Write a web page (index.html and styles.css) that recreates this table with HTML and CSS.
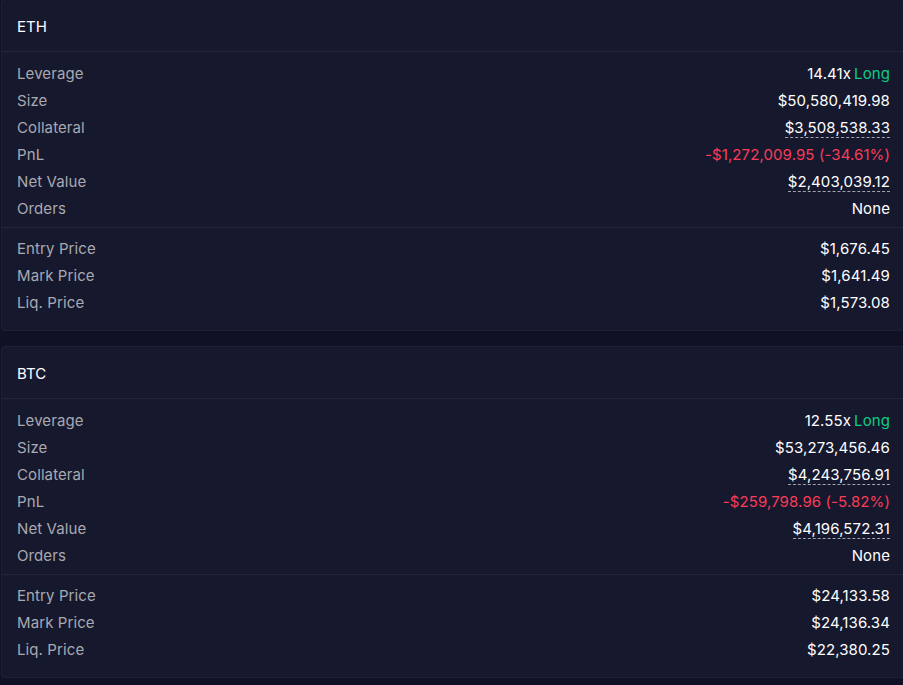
FILE: index.html
```html
<!DOCTYPE html>
<html>
<head>
<meta charset="utf-8">
<link rel="stylesheet" href="styles.css">
</head>
<body>
<div class="list">
  <section class="card">
    <div class="card-title">ETH</div>
    <div class="divider"></div>
    <div class="card-body">
      <div class="row"><span class="label">Leverage</span><span class="value">14.41x<span class="long">Long</span></span></div>
      <div class="row"><span class="label">Size</span><span class="value">$50,580,419.98</span></div>
      <div class="row"><span class="label">Collateral</span><span class="value"><span class="tip">$3,508,538.33</span></span></div>
      <div class="row"><span class="label">PnL</span><span class="value negative">-$1,272,009.95 (-34.61%)</span></div>
      <div class="row"><span class="label">Net Value</span><span class="value"><span class="tip">$2,403,039.12</span></span></div>
      <div class="row"><span class="label">Orders</span><span class="value">None</span></div>
    </div>
    <div class="divider"></div>
    <div class="card-body lower">
      <div class="row"><span class="label">Entry Price</span><span class="value">$1,676.45</span></div>
      <div class="row"><span class="label">Mark Price</span><span class="value">$1,641.49</span></div>
      <div class="row"><span class="label">Liq. Price</span><span class="value">$1,573.08</span></div>
    </div>
  </section>
  <section class="card">
    <div class="card-title">BTC</div>
    <div class="divider"></div>
    <div class="card-body">
      <div class="row"><span class="label">Leverage</span><span class="value">12.55x<span class="long">Long</span></span></div>
      <div class="row"><span class="label">Size</span><span class="value">$53,273,456.46</span></div>
      <div class="row"><span class="label">Collateral</span><span class="value"><span class="tip">$4,243,756.91</span></span></div>
      <div class="row"><span class="label">PnL</span><span class="value negative">-$259,798.96 (-5.82%)</span></div>
      <div class="row"><span class="label">Net Value</span><span class="value"><span class="tip">$4,196,572.31</span></span></div>
      <div class="row"><span class="label">Orders</span><span class="value">None</span></div>
    </div>
    <div class="divider"></div>
    <div class="card-body lower">
      <div class="row"><span class="label">Entry Price</span><span class="value">$24,133.58</span></div>
      <div class="row"><span class="label">Mark Price</span><span class="value">$24,136.34</span></div>
      <div class="row"><span class="label">Liq. Price</span><span class="value">$22,380.25</span></div>
    </div>
  </section>
</div>
</body>
</html>
```
FILE: styles.css
```css
html, body {
  margin: 0;
  padding: 0;
  background: #101124;
  overflow: hidden;
}
body {
  font-family: Inter, "Noto Sans", sans-serif;
  font-size: 15px;
  color: #ffffff;
}
.list {
  display: flex;
  flex-direction: column;
  gap: 15px;
  margin-top: -1px;
  padding-left: 1px;
  width: 904px;
}
.card {
  background: #16182e;
  border: 1px solid #1e2136;
  border-radius: 4px;
}
.card-title {
  padding: 16px 15px 14px;
  line-height: 21px;
  font-size: 15px;
}
.divider {
  height: 1px;
  background: #23263b;
}
.card-body {
  padding: 8px 14px 5px 15px;
}
.card-body.lower {
  padding: 7px 14px 14px 15px;
}
.row {
  display: flex;
  justify-content: space-between;
  align-items: center;
  height: 27px;
}
.label {
  color: #a9a9b0;
  letter-spacing: 0.1px;
}
.value {
  color: #ffffff;
  letter-spacing: 0.1px;
}
.long {
  color: #0ecc83;
  margin-left: 3px;
}
.negative {
  color: #fa3c58;
}
.tip {
  border-bottom: 1px dashed rgba(255, 255, 255, 0.6);
}
```
